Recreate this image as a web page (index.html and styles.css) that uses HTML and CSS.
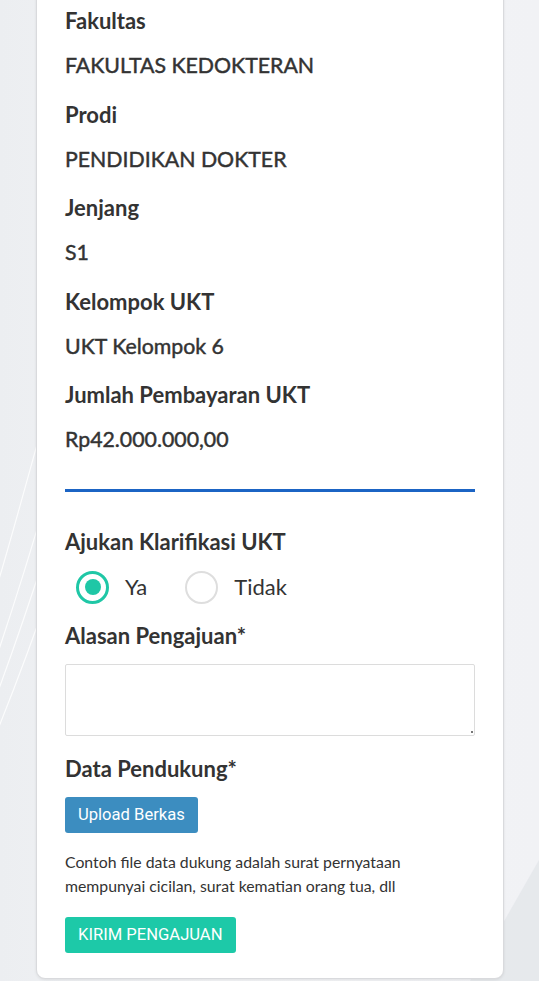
FILE: index.html
```html
<!DOCTYPE html>
<html lang="id">
<head>
<meta charset="utf-8">
<title>Klarifikasi UKT</title>
<link rel="stylesheet" href="styles.css">
</head>
<body>
<svg class="bg-lines" width="539" height="981" viewBox="0 0 539 981" aria-hidden="true">
  <path d="M-40 760 C 20 600, 60 450, 110 280" />
  <path d="M-40 790 C 25 630, 70 480, 120 300" />
  <path d="M-40 820 C 30 660, 80 510, 130 330" />
  <path d="M-40 700 C 10 560, 40 420, 80 300" />
  <path class="shade" d="M539 860 L539 981 L470 981 Z" />
</svg>
<main class="card">
  <div class="field">
    <div class="label">Fakultas</div>
    <div class="value">FAKULTAS KEDOKTERAN</div>
  </div>
  <div class="field">
    <div class="label">Prodi</div>
    <div class="value">PENDIDIKAN DOKTER</div>
  </div>
  <div class="field">
    <div class="label">Jenjang</div>
    <div class="value">S1</div>
  </div>
  <div class="field">
    <div class="label">Kelompok UKT</div>
    <div class="value">UKT Kelompok 6</div>
  </div>
  <div class="field">
    <div class="label">Jumlah Pembayaran UKT</div>
    <div class="value">Rp42.000.000,00</div>
  </div>

  <hr class="divider">

  <form class="form">
    <div class="label">Ajukan Klarifikasi UKT</div>
    <div class="radios">
      <label class="radio"><span class="dot checked"></span><span class="radio-text">Ya</span></label>
      <label class="radio"><span class="dot"></span><span class="radio-text">Tidak</span></label>
    </div>
    <div class="label label-alasan">Alasan Pengajuan*</div>
    <div class="textarea"><span class="grip"></span></div>
    <div class="label label-data">Data Pendukung*</div>
    <div><span class="btn btn-upload">Upload Berkas</span></div>
    <p class="hint">Contoh file data dukung adalah surat pernyataan mempunyai cicilan, surat kematian orang tua, dll</p>
    <div><span class="btn btn-send">KIRIM PENGAJUAN</span></div>
  </form>
</main>
</body>
</html>
```

FILE: styles.css
```css
html, body {
  margin: 0;
  padding: 0;
}
body {
  width: 539px;
  height: 981px;
  overflow: hidden;
  background: linear-gradient(90deg, #eceef1 0%, #f3f4f6 40%, #f1f2f5 100%);
  font-family: Lato, "Open Sans", sans-serif;
  color: #333;
  position: relative;
}
.bg-lines {
  position: absolute;
  left: 0;
  top: 0;
  z-index: 0;
}
.bg-lines path {
  fill: none;
  stroke: #ffffff;
  stroke-width: 1.2;
  opacity: 0.8;
}
.bg-lines path.shade {
  fill: #e4e6ea;
  stroke: none;
}
.card {
  position: relative;
  z-index: 1;
  box-sizing: border-box;
  width: 468px;
  margin: -20px 0 0 36px;
  padding: 28px 28px 25px 28px;
  background: #fff;
  border: 1px solid #d9dadd;
  border-radius: 0 0 9px 9px;
  box-shadow: 0 1px 3px rgba(0,0,0,0.08);
  display: flex;
  flex-direction: column;
  gap: 25.5px;
}
.field {
  display: flex;
  flex-direction: column;
  gap: 20px;
}
.label {
  font-size: 22px;
  line-height: 24px;
  font-weight: 700;
  color: #333;
}
.value {
  font-size: 21.3px;
  line-height: 24px;
  font-weight: 400;
  -webkit-text-stroke: 0.45px #333;
  color: #333;
}
.divider {
  margin: 12.5px 0 0 0;
  border: 0;
  height: 3px;
  background: #1b64c4;
}
.form {
  display: flex;
  flex-direction: column;
  margin-top: 12px;
}
.radios {
  display: flex;
  align-items: center;
  gap: 38px;
  margin-top: 17px;
  padding-left: 11px;
}
.radio {
  display: flex;
  align-items: center;
  gap: 16px;
}
.dot {
  box-sizing: border-box;
  width: 33px;
  height: 33px;
  border-radius: 50%;
  border: 2px solid #dedede;
  background: #fff;
  display: flex;
  align-items: center;
  justify-content: center;
}
.dot.checked {
  border: 3px solid #1fc7a6;
}
.dot.checked::after {
  content: "";
  width: 16px;
  height: 16px;
  border-radius: 50%;
  background: #1fc7a6;
}
.radio-text {
  font-size: 22px;
  line-height: 24px;
  font-weight: 400;
  color: #333;
}
.label-alasan {
  margin-top: 20px;
}
.textarea {
  position: relative;
  box-sizing: border-box;
  height: 72px;
  margin-top: 16px;
  border: 1px solid #dcdcdc;
  border-radius: 2px;
  background: #fff;
}
.grip {
  position: absolute;
  right: 1px;
  bottom: 2px;
  width: 2px;
  height: 2px;
  background: #777;
}
.label-data {
  margin-top: 21px;
}
.btn {
  display: inline-block;
  box-sizing: border-box;
  height: 36px;
  line-height: 36px;
  padding: 0 13px;
  border-radius: 3px;
  color: #fff;
  font-family: Roboto, "Liberation Sans", sans-serif;
  font-size: 16.6px;
  font-weight: 400;
}
.btn-upload {
  margin-top: 16px;
  background: #3c8dc0;
}
.hint {
  margin: 17px 0 0 0;
  font-size: 15.8px;
  line-height: 24px;
  color: #333;
}
.btn-send {
  margin-top: 19px;
  background: #1dc9a8;
}
```
